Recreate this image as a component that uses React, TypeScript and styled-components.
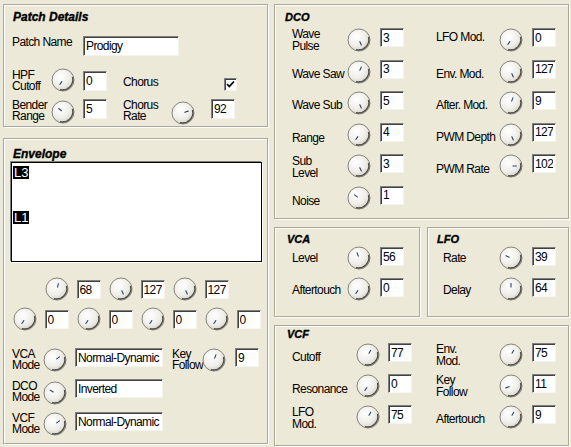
import React, { FC } from "react";
import styled, { createGlobalStyle } from "styled-components";

const GlobalStyle = createGlobalStyle`
  body {
    margin: 0;
    background: #ece9d8;
    font-family: "Liberation Sans", Arial, sans-serif;
    font-size: 12px;
    letter-spacing: -0.6px;
    color: #000;
  }
`;

const Page = styled.div`
  width: 571px;
  height: 447px;
  box-sizing: border-box;
  padding: 4px 0 0 3px;
  display: flex;
  gap: 6px;
  overflow: hidden;
`;

const Column = styled.div<{ $w: number; $gap: number }>`
  width: ${(p) => p.$w}px;
  display: flex;
  flex-direction: column;
  gap: ${(p) => p.$gap}px;
`;

const Group = styled.section<{ $w?: number; $h: number; $pt: number; $pl: number }>`
  box-sizing: border-box;
  width: ${(p) => (p.$w ? `${p.$w}px` : "100%")};
  height: ${(p) => p.$h}px;
  padding: ${(p) => p.$pt}px 0 0 ${(p) => p.$pl}px;
  border: 1px solid #aca899;
  box-shadow: inset 1px 1px 0 #fff, 1px 1px 0 #fff;
  flex-shrink: 0;
`;

const Title = styled.div<{ $size?: number; $ml?: number }>`
  font-family: "Liberation Sans", Arial, sans-serif;
  font-weight: bold;
  font-style: italic;
  font-size: ${(p) => p.$size ?? 12}px;
  letter-spacing: 0;
  line-height: 13px;
  height: 13px;
  margin-left: ${(p) => p.$ml ?? 0}px;
  -webkit-text-stroke: 0.35px #000;
`;

const Row = styled.div<{ $mt?: number; $ml?: number; $h?: number }>`
  display: flex;
  align-items: flex-start;
  height: ${(p) => p.$h ?? 24}px;
  margin-top: ${(p) => p.$mt ?? 0}px;
  margin-left: ${(p) => p.$ml ?? 0}px;
`;

const Label = styled.div<{ $w: number; $mt?: number; $ml?: number; $lh?: number }>`
  width: ${(p) => p.$w}px;
  flex-shrink: 0;
  margin-top: ${(p) => p.$mt ?? 0}px;
  margin-left: ${(p) => p.$ml ?? 0}px;
  line-height: ${(p) => p.$lh ?? 12}px;
  white-space: nowrap;
`;

const Field = styled.input<{ $w?: number; $mt?: number; $ml?: number; $h?: number }>`
  box-sizing: border-box;
  width: ${(p) => p.$w ?? 24}px;
  height: ${(p) => p.$h ?? 19}px;
  margin: ${(p) => p.$mt ?? 0}px 0 0 ${(p) => p.$ml ?? 0}px;
  flex-shrink: 0;
  padding: 0 2px;
  border: 1px solid;
  border-color: #808080 #f4f3ee #f4f3ee #808080;
  box-shadow: inset 1px 1px 0 #404040;
  background: #fff;
  font-family: "Liberation Sans", Arial, sans-serif;
  font-size: 12px;
  letter-spacing: -0.6px;
  color: #000;
  outline: none;
`;

const KnobSvg = styled.svg<{ $mt?: number; $ml?: number }>`
  display: block;
  flex-shrink: 0;
  margin: ${(p) => p.$mt ?? 0}px 0 0 ${(p) => p.$ml ?? 0}px;
`;

const Knob: FC<{ a: number; mt?: number; ml?: number }> = ({ a, mt, ml }) => {
  const c = 12;
  const rad = (a * Math.PI) / 180;
  const sx = Math.sin(rad);
  const cy = Math.cos(rad);
  return (
    <KnobSvg width={24} height={24} viewBox="0 0 24 24" $mt={mt} $ml={ml}>
      <defs>
        <radialGradient id="knobFill" cx="38%" cy="34%" r="72%">
          <stop offset="0" stopColor="#ffffff" />
          <stop offset="0.6" stopColor="#efeee8" />
          <stop offset="1" stopColor="#cfccbf" />
        </radialGradient>
      </defs>
      <circle cx={c} cy={c} r={11} fill="url(#knobFill)" stroke="#85837a" strokeWidth={1} />
      <path d="M21.5 9 A10.3 10.3 0 0 1 9 21.6" fill="none" stroke="#4a4944" strokeWidth={1.3} />
      <line
        x1={c + sx * 2}
        y1={c - cy * 2}
        x2={c + sx * 5.5}
        y2={c - cy * 5.5}
        stroke="#27407c"
        strokeWidth={1.1}
        strokeLinecap="round"
      />
    </KnobSvg>
  );
};

const CheckBox = styled.span<{ $mt?: number }>`
  box-sizing: border-box;
  width: 13px;
  height: 13px;
  margin-top: ${(p) => p.$mt ?? 0}px;
  border: 1px solid;
  border-color: #808080 #f4f3ee #f4f3ee #808080;
  box-shadow: inset 1px 1px 0 #404040;
  background: #fff;
  display: flex;
  align-items: center;
  justify-content: center;
`;

const Canvas = styled.div`
  position: relative;
  box-sizing: border-box;
  width: 251px;
  height: 100px;
  margin-top: 1px;
  background: #fff;
  border: 1px solid #000;
  box-shadow: -1px -1px 0 #808080, 1px 1px 0 #fff;
`;

const LevelTag = styled.span<{ $top: number }>`
  position: absolute;
  left: 1px;
  top: ${(p) => p.$top}px;
  background: #000;
  color: #fff;
  font-size: 13px;
  letter-spacing: 0;
  line-height: 13px;
  padding: 0 1px;
`;

const KnobRow = styled.div<{ $mt: number }>`
  display: flex;
  justify-content: center;
  align-items: flex-start;
  gap: 8px;
  height: 24px;
  width: 251px;
  margin-top: ${(p) => p.$mt}px;
`;

const Unit = styled.div`
  display: flex;
  align-items: flex-start;
  gap: 8px;
`;

const Stack = styled.div<{ $gap: number; $ml?: number; $mt?: number }>`
  display: flex;
  flex-direction: column;
  gap: ${(p) => p.$gap}px;
  margin-left: ${(p) => p.$ml ?? 0}px;
  margin-top: ${(p) => p.$mt ?? 0}px;
`;

const Columns = styled.div<{ $mt?: number; $ml?: number }>`
  display: flex;
  margin-top: ${(p) => p.$mt ?? 0}px;
  margin-left: ${(p) => p.$ml ?? 0}px;
`;

type Ctl = { label: React.ReactNode; lw: number; lt?: number; a: number; v: string; g?: number; it?: number };

const Control: FC<Ctl> = ({ label, lw, lt = 0, a, v, g = 9, it = 0 }) => (
  <Row>
    <Label $w={lw} $mt={lt}>
      {label}
    </Label>
    <Knob a={a} />
    <Field readOnly value={v} $ml={g} $mt={it} />
  </Row>
);

const two = (a: string, b: string) => (
  <>
    {a}
    <br />
    {b}
  </>
);

const dcoLeft: Ctl[] = [
  { label: two("Wave", "Pulse"), lw: 55, lt: 0, a: 155, v: "3" },
  { label: "Wave Saw", lw: 55, lt: 8, a: 25, v: "3" },
  { label: "Wave Sub", lw: 55, lt: 8, a: 155, v: "5" },
  { label: "Range", lw: 55, lt: 9, a: 215, v: "4" },
  { label: two("Sub", "Level"), lw: 55, lt: 1, a: 155, v: "3" },
  { label: "Noise", lw: 55, lt: 9, a: 305, v: "1" },
];

const dcoRight: Ctl[] = [
  { label: "LFO Mod.", lw: 63, lt: 3, a: 215, v: "0" },
  { label: "Env. Mod.", lw: 63, lt: 8, a: 155, v: "127" },
  { label: "After. Mod.", lw: 63, lt: 8, a: 20, v: "9" },
  { label: "PWM Depth", lw: 63, lt: 8, a: 155, v: "127" },
  { label: "PWM Rate", lw: 63, lt: 9, a: 90, v: "102" },
];

const vcfLeft: Ctl[] = [
  { label: "Cutoff", lw: 64, lt: 8, a: 30, v: "77", g: 8 },
  { label: "Resonance", lw: 64, lt: 9, a: 215, v: "0", g: 8 },
  { label: two("LFO", "Mod."), lw: 64, lt: 1, a: 30, v: "75", g: 8 },
];

const vcfRight: Ctl[] = [
  { label: two("Env.", "Mod."), lw: 63, lt: 0, a: 30, v: "75" },
  { label: two("Key", "Follow"), lw: 63, lt: 0, a: 250, v: "11" },
  { label: "Aftertouch", lw: 63, lt: 8, a: 30, v: "9" },
];

const envTop = [
  { a: 15, v: "68" },
  { a: 155, v: "127" },
  { a: 155, v: "127" },
];
const envBottom = [
  { a: 215, v: "0" },
  { a: 215, v: "0" },
  { a: 215, v: "0" },
  { a: 215, v: "0" },
];

const PatchDetails: FC = () => (
  <Group $h={123} $pt={6} $pl={8}>
    <Title $ml={1}>Patch Details</Title>
    <Row $mt={12} $h={20}>
      <Label $w={71} $lh={13}>
        Patch Name
      </Label>
      <Field readOnly value="Prodigy" $w={96} $h={20} />
    </Row>
    <Row $mt={12}>
      <Label $w={39} $mt={2} $lh={11}>
        {two("HPF", "Cutoff")}
      </Label>
      <Knob a={215} />
      <Field readOnly value="0" $ml={8} $mt={3} $h={20} />
      <Label $w={101} $ml={16} $mt={8}>
        Chorus
      </Label>
      <CheckBox $mt={10}>
        <svg width={9} height={9} viewBox="0 0 9 9">
          <polyline points="1,4 3.3,6.5 8,1.5" fill="none" stroke="#000" strokeWidth={1.8} />
        </svg>
      </CheckBox>
    </Row>
    <Row $mt={7}>
      <Label $w={39} $mt={1} $lh={11}>
        {two("Bender", "Range")}
      </Label>
      <Knob a={310} mt={1} />
      <Field readOnly value="5" $ml={8} $h={20} />
      <Label $w={48} $ml={16} $mt={1} $lh={11}>
        {two("Chorus", "Rate")}
      </Label>
      <Knob a={70} mt={2} />
      <Field readOnly value="92" $ml={16} $h={20} />
    </Row>
  </Group>
);

const Envelope: FC = () => (
  <Group $h={306} $pt={9} $pl={7}>
    <Title $ml={2}>Envelope</Title>
    <Canvas>
      <LevelTag $top={3}>L3</LevelTag>
      <LevelTag $top={48}>L1</LevelTag>
    </Canvas>
    <KnobRow $mt={15}>
      {envTop.map((k, i) => (
        <Unit key={i}>
          <Knob a={k.a} />
          <Field readOnly value={k.v} $mt={3} />
        </Unit>
      ))}
    </KnobRow>
    <KnobRow $mt={6}>
      {envBottom.map((k, i) => (
        <Unit key={i}>
          <Knob a={k.a} />
          <Field readOnly value={k.v} $mt={3} />
        </Unit>
      ))}
    </KnobRow>
    <Row $mt={17} $ml={1}>
      <Label $w={31} $mt={1} $lh={11}>
        {two("VCA", "Mode")}
      </Label>
      <Knob a={55} />
      <Field readOnly value="Normal-Dynamic" $w={88} $ml={8} />
      <Label $w={30} $ml={9} $mt={1} $lh={11}>
        {two("Key", "Follow")}
      </Label>
      <Knob a={20} />
      <Field readOnly value="9" $ml={9} />
    </Row>
    <Row $mt={7} $ml={1}>
      <Label $w={31} $mt={2} $lh={11}>
        {two("DCO", "Mode")}
      </Label>
      <Knob a={300} mt={2} />
      <Field readOnly value="Inverted" $w={88} $ml={8} />
    </Row>
    <Row $mt={9} $ml={1}>
      <Label $w={31} $mt={1} $lh={11}>
        {two("VCF", "Mode")}
      </Label>
      <Knob a={55} />
      <Field readOnly value="Normal-Dynamic" $w={88} $ml={8} />
    </Row>
  </Group>
);

const Dco: FC = () => (
  <Group $h={215} $pt={6} $pl={10}>
    <Title $size={11}>DCO</Title>
    <Columns $mt={4} $ml={7}>
      <Stack $gap={7.6}>
        {dcoLeft.map((c, i) => (
          <Control key={i} {...c} />
        ))}
      </Stack>
      <Stack $gap={7.6} $ml={32}>
        {dcoRight.map((c, i) => (
          <Control key={i} {...c} />
        ))}
      </Stack>
    </Columns>
  </Group>
);

const Vca: FC = () => (
  <Group $w={146} $h={90} $pt={5} $pl={12}>
    <Title $size={11}>VCA</Title>
    <Stack $gap={7} $ml={5}>
      <Control label="Level" lw={55} lt={6} a={340} v="56" it={1} />
      <Control label="Aftertouch" lw={55} lt={7} a={215} v="0" it={1} />
    </Stack>
  </Group>
);

const Lfo: FC = () => (
  <Group $w={142} $h={90} $pt={5} $pl={9}>
    <Title $size={11}>LFO</Title>
    <Stack $gap={7} $ml={6}>
      <Control label="Rate" lw={56} lt={6} a={295} v="39" it={1} />
      <Control label="Delay" lw={56} lt={7} a={0} v="64" it={1} />
    </Stack>
  </Group>
);

const Vcf: FC = () => (
  <Group $h={121} $pt={2} $pl={12}>
    <Title $size={11}>VCF</Title>
    <Columns $mt={2} $ml={5}>
      <Stack $gap={7}>
        {vcfLeft.map((c, i) => (
          <Control key={i} {...c} />
        ))}
      </Stack>
      <Stack $gap={7} $ml={24}>
        {vcfRight.map((c, i) => (
          <Control key={i} {...c} />
        ))}
      </Stack>
    </Columns>
  </Group>
);

const Pair = styled.div`
  display: flex;
  gap: 7px;
`;

export default function App() {
  return (
    <>
      <GlobalStyle />
      <Page>
        <Column $w={265} $gap={11}>
          <PatchDetails />
          <Envelope />
        </Column>
        <Column $w={295} $gap={8}>
          <Dco />
          <Pair>
            <Vca />
            <Lfo />
          </Pair>
          <Vcf />
        </Column>
      </Page>
    </>
  );
}
